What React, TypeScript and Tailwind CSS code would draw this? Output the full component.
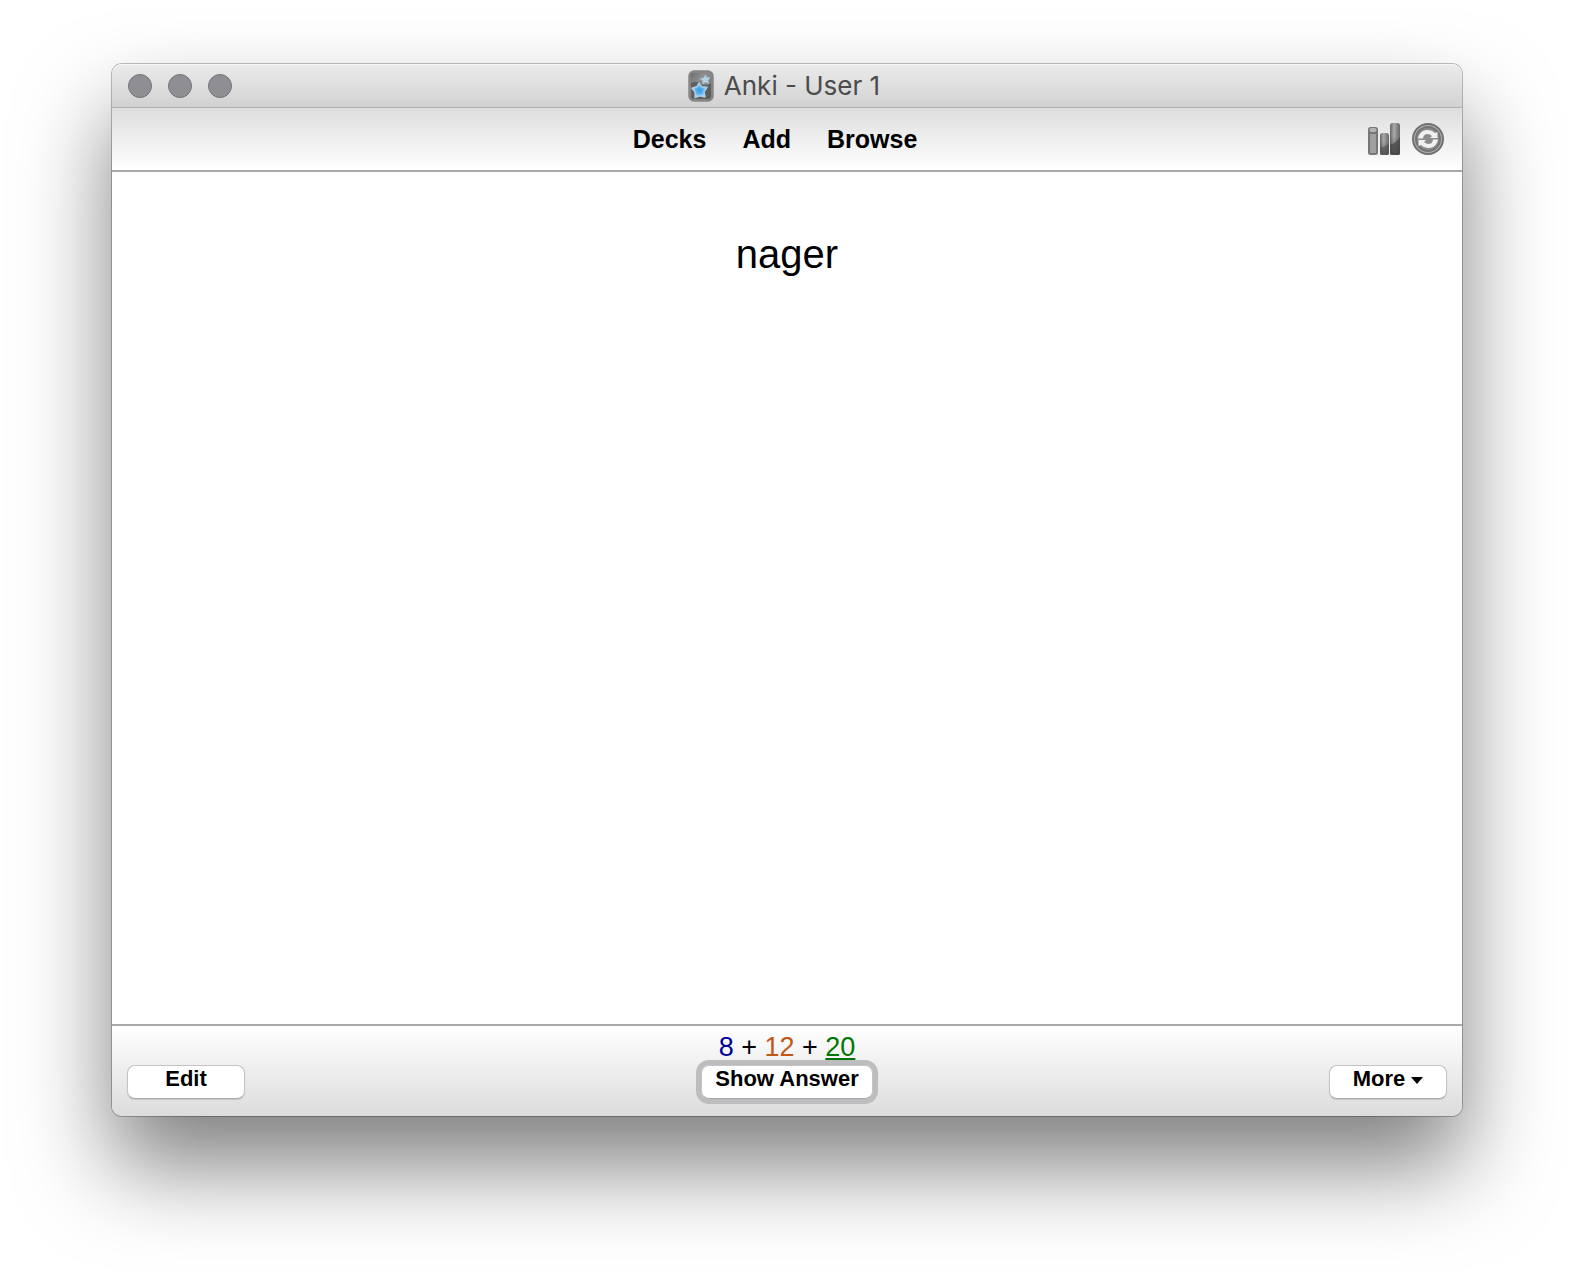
import React from "react";

function AppIcon() {
  return (
    <svg className="h-8 w-[26px] shrink-0" viewBox="0 0 26 32" aria-hidden="true">
      <defs>
        <linearGradient id="card" x1="0" y1="0" x2="1" y2="1">
          <stop offset="0" stopColor="#686868" />
          <stop offset=".35" stopColor="#8e8e8e" />
          <stop offset="1" stopColor="#707070" />
        </linearGradient>
        <radialGradient id="star">
          <stop offset="0" stopColor="#2f9be6" />
          <stop offset=".5" stopColor="#5cb2ec" />
          <stop offset="1" stopColor="#b9dcf3" />
        </radialGradient>
      </defs>
      <rect x="1.500" y="1.500" width="23" height="29" rx="4.500" fill="url(#card)" stroke="#868686" strokeWidth="2.500" />
      <path d="M3 13Q9 10 13 14Q18 17 23 13V26Q23 29 20 29H6Q3 29 3 26Z" fill="#565656" opacity=".8" />
      <path d="M17.500 5l1.300 2.600 3.200.2-2.100 2.600.9 3-3.300-1.200-2.700 1.900.2-3.300-2.600-2 3.200-.9z" fill="#b9d3e6" stroke="#a9bccb" strokeLinejoin="round" />
      <path d="M11 13l2.500 3.700 5.500.6-3 4.500 1 5.200-5.200-1.200-4.700 1.700.1-5.400-3.200-3.900 5-1.500z" fill="url(#star)" stroke="#a9cfe9" strokeWidth="1.500" strokeLinejoin="round" />
    </svg>
  );
}

function StatsIcon() {
  return (
    <svg className="size-8" viewBox="0 0 32 32" aria-hidden="true">
      <defs>
        <linearGradient id="bar" x1="0" x2="1">
          <stop offset="0" stopColor="#666" />
          <stop offset=".4" stopColor="#aaa" />
          <stop offset="1" stopColor="#666" />
        </linearGradient>
        <linearGradient id="shade" x1="0" y1="0" x2="0" y2="1">
          <stop offset=".4" stopColor="#333" stopOpacity="0" />
          <stop offset="1" stopColor="#333" stopOpacity=".6" />
        </linearGradient>
      </defs>
      <rect x="0" y="4" width="10" height="28" rx="2.500" fill="#777" />
      <rect x="2" y="11" width="6" height="19" fill="#a0a0a0" />
      <rect x="1.500" y="5" width="7" height="4" rx="2" fill="#b5b5b5" />
      <rect x="12" y="10" width="9" height="22" rx="2.500" fill="url(#bar)" />
      <rect x="12" y="10" width="9" height="22" rx="2.500" fill="url(#shade)" />
      <path d="M12 25Q18 24 21 20V30Q21 32 19 32H14Q12 32 12 30z" fill="#555" opacity=".7" />
      <rect x="22" y="0" width="10" height="32" rx="2.500" fill="url(#bar)" />
      <rect x="22" y="0" width="10" height="32" rx="2.500" fill="url(#shade)" />
      <path d="M22 22Q28 20 32 14V30Q32 32 30 32H24Q22 32 22 30z" fill="#444" opacity=".7" />
    </svg>
  );
}

function SyncIcon() {
  return (
    <svg className="size-8" viewBox="0 0 32 32" aria-hidden="true">
      <circle cx="16" cy="16" r="15" fill="#b0b0b0" stroke="#707070" strokeWidth="2" />
      <circle cx="16" cy="16" r="12" fill="#8c8c8c" stroke="#737373" strokeWidth="2" />
      <path
        d="M6 15.500C7 9.500 11 7 16 7Q20 7 23 10L25.500 9V15H18L20 13Q18 11 15.500 11Q11.500 11 11 15.500Z"
        fill="#f0f0f0"
      />
      <path
        d="M26 16.500C25 22.500 21 25 16 25Q12 25 9 22L6.500 23V17H14L12 19Q14 21 16.500 21Q20.500 21 21 16.500Z"
        fill="#f0f0f0"
      />
    </svg>
  );
}

const lights = ["Close", "Minimize", "Zoom"];
const pill =
  "flex h-[34px] items-start justify-center rounded-lg border border-[#c4c4c4] border-b-[#a8a8a8] bg-white text-[22px] leading-[26px] font-bold shadow-[0_1px_1px_rgba(0,0,0,0.12)]";

export default function App() {
  return (
    <div className="flex min-h-screen flex-col bg-white px-28 pt-16 pb-40 font-['Liberation_Sans',Arial,sans-serif] text-black">
      <div className="flex flex-1 flex-col rounded-[10px] shadow-[0_0_0_1px_rgba(0,0,0,0.25),0_50px_90px_rgba(0,0,0,0.5)]">
        <header className="grid h-11 grid-cols-[1fr_auto_1fr] items-center rounded-t-[10px] border-b border-[#b1b1b1] bg-linear-to-b from-[#ebebeb] to-[#d2d2d2] px-4 shadow-[inset_0_1px_0_#f6f6f6]">
          <div className="flex gap-4">
            {lights.map((name) => (
              <button key={name} aria-label={name} className="size-6 rounded-full border border-[#737276] bg-[#8f8e93]" />
            ))}
          </div>
          <h1 className="flex items-center gap-2.5 pr-1.5 font-[Inter,sans-serif] text-[26px] leading-8 text-[#4b4b4b]">
            <AppIcon />
            Anki - User 1
          </h1>
        </header>

        <nav className="grid h-16 grid-cols-[1fr_auto_1fr] items-center border-b-2 border-[#a9a9a9] bg-linear-to-b from-[#dedede] to-white px-[18px]">
          <div />
          <div className="flex gap-9 pr-6 text-[25px] leading-8 font-bold">
            <a href="#decks">Decks</a>
            <a href="#add">Add</a>
            <a href="#browse">Browse</a>
          </div>
          <div className="flex justify-end gap-3">
            <button aria-label="Statistics"><StatsIcon /></button>
            <button aria-label="Synchronize"><SyncIcon /></button>
          </div>
        </nav>

        <main className="flex-1 bg-white pt-[58px] text-center text-[40px] leading-[48px]">nager</main>

        <footer className="grid grid-cols-[1fr_auto_1fr] items-end rounded-b-[10px] border-t-2 border-[#a9a9a9] bg-linear-to-b from-white to-[#dcdcdc] px-[15px] pt-1 pb-[17px]">
          <button className={`${pill} w-[118px]`}>Edit</button>
          <div className="flex flex-col items-center">
            <p className="text-[27px] leading-[35px]">
              <span className="text-[#000099]">8</span> + <span className="text-[#c35617]">12</span> +{" "}
              <span className="text-[#007700] underline decoration-2 underline-offset-2">20</span>
            </p>
            <button className={`${pill} w-[172px] outline-[5px] outline-[#bdbdbf]`}>Show Answer</button>
          </div>
          <button className={`${pill} w-[118px] gap-1.5 justify-self-end`}>
            More
            <svg className="mt-[11px] h-[7px] w-3" viewBox="0 0 12 7" aria-hidden="true">
              <path d="M0 0h12L6 7z" />
            </svg>
          </button>
        </footer>
      </div>
    </div>
  );
}
